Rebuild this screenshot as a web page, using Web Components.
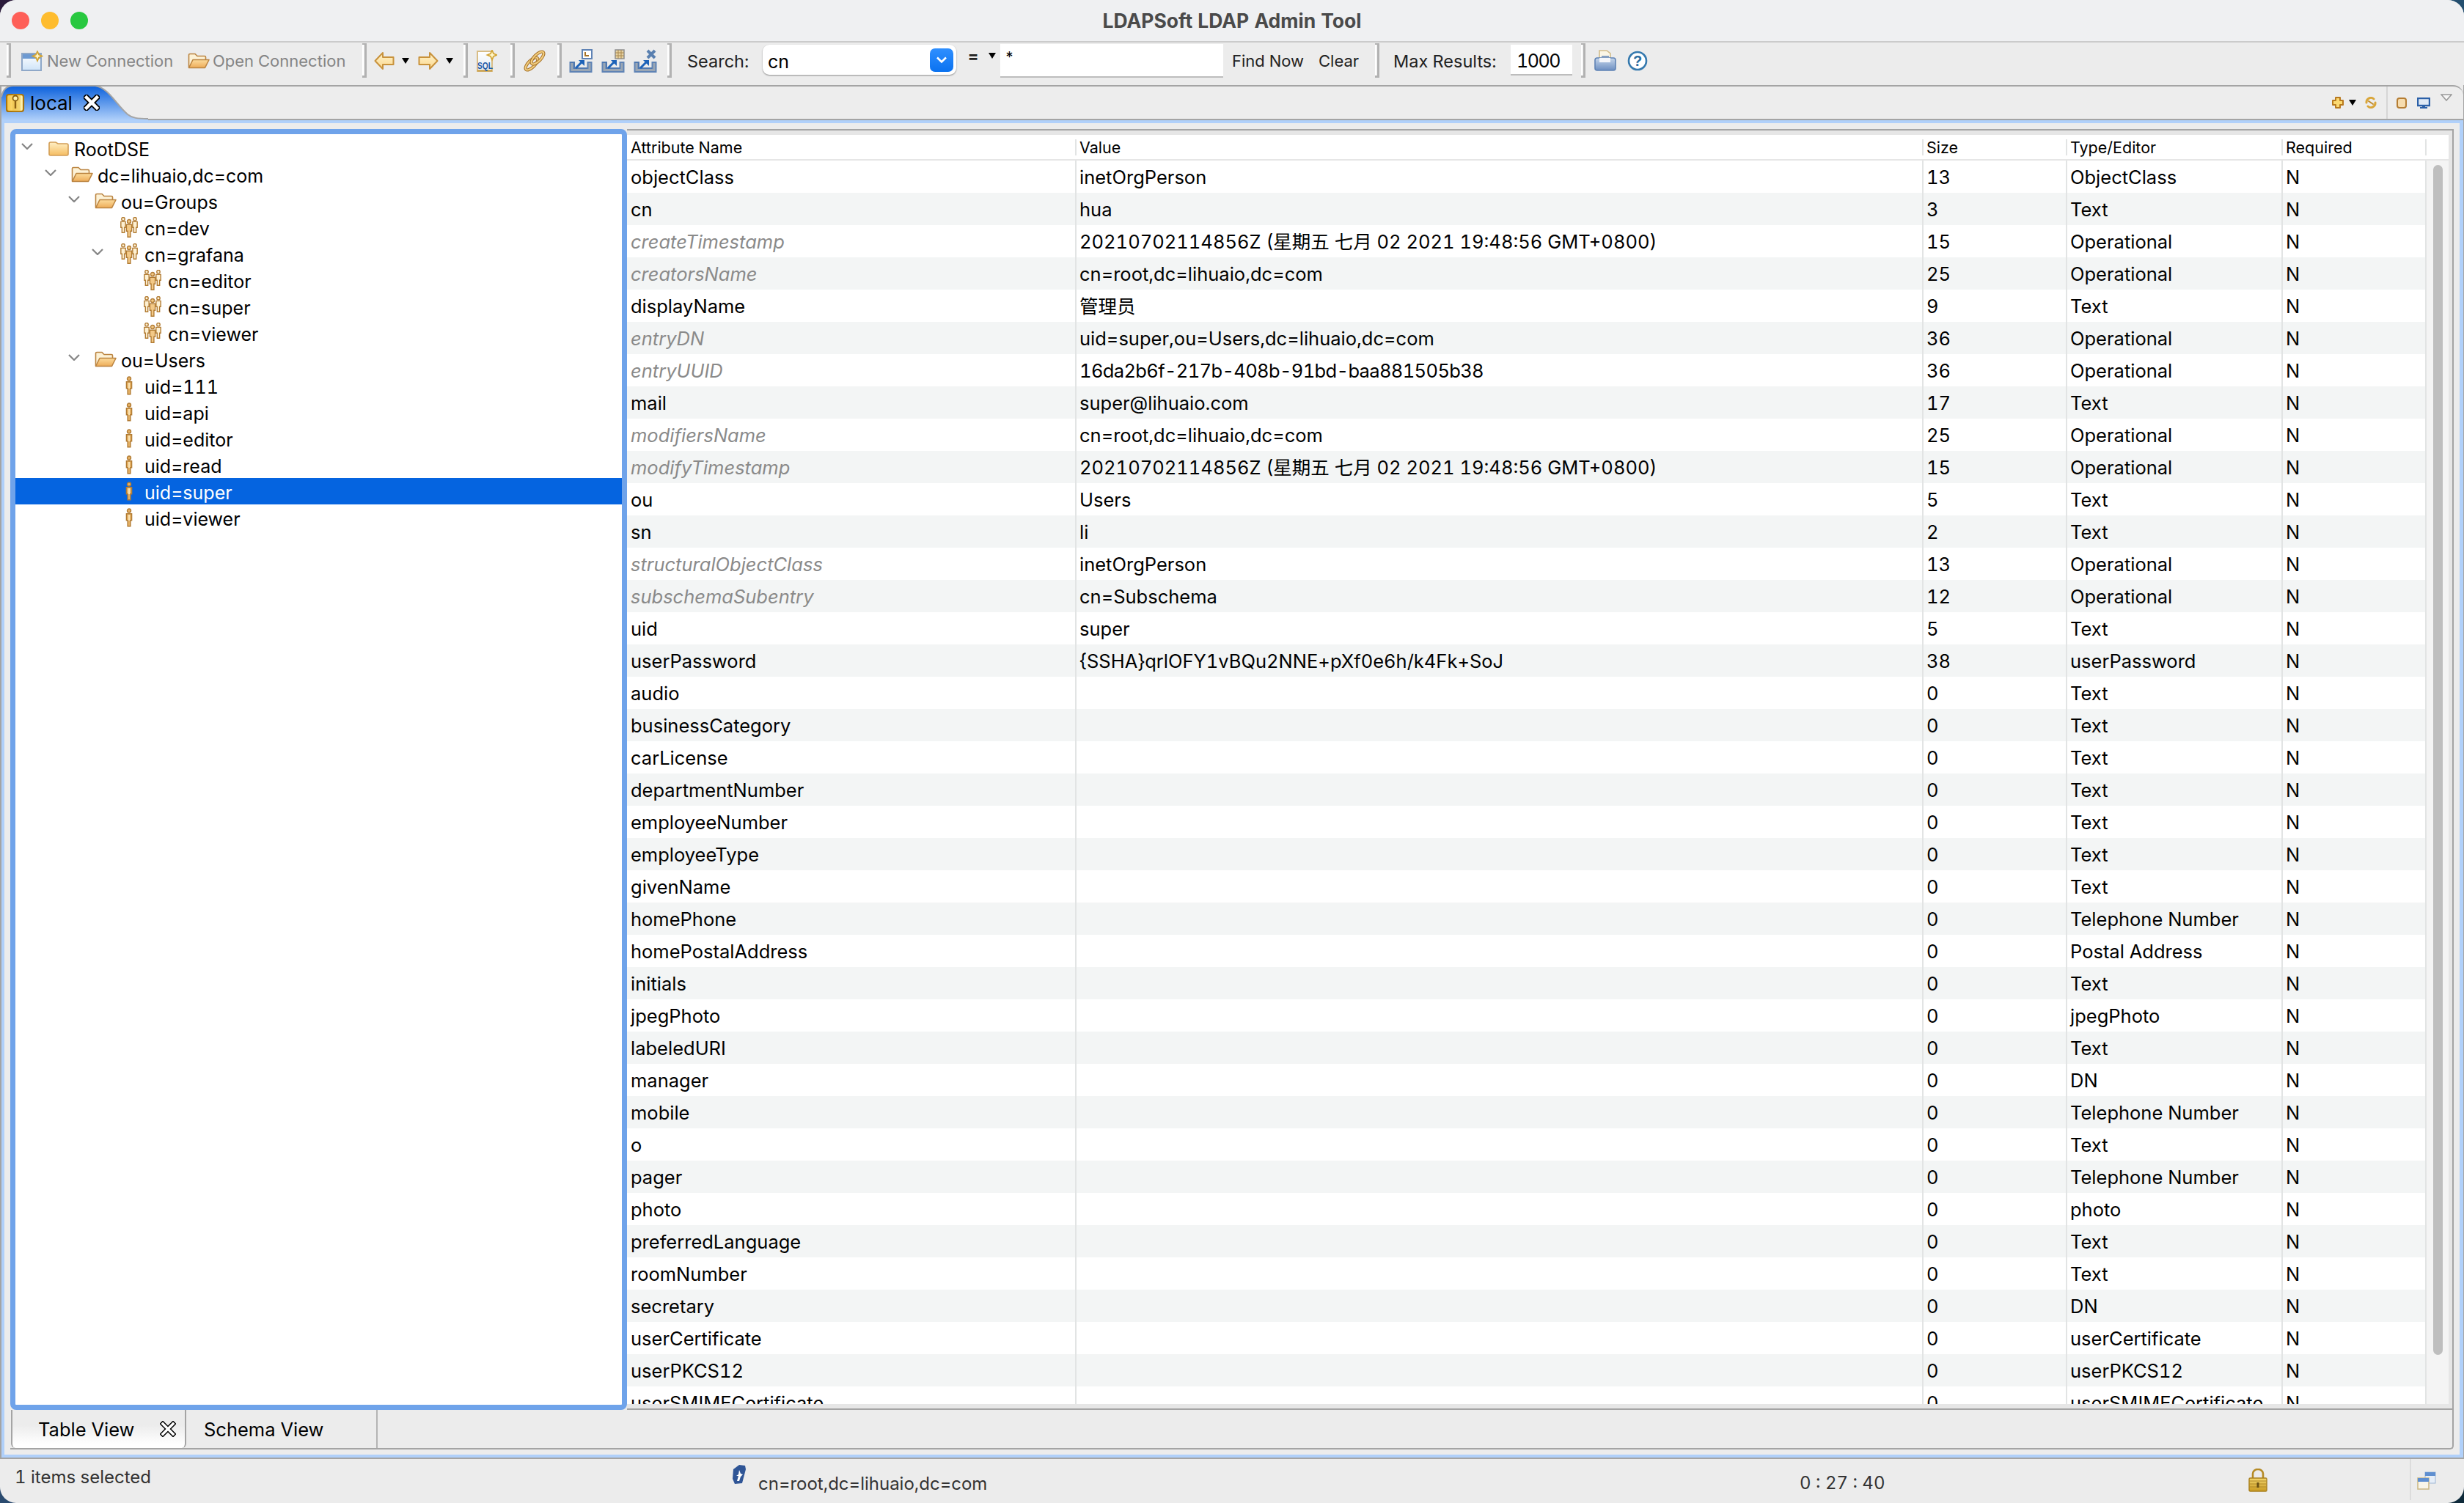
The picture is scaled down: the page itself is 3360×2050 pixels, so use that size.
<!doctype html>
<html>
<head>
<meta charset="utf-8">
<style>
  html { background: linear-gradient(135deg, #2a1a3a 0%, #2a5a80 50%, #0e2a3a 100%); }
  body { margin: 0; width: 3360px; height: 2050px; overflow: hidden; font-family: Inter, "Noto Sans CJK SC", sans-serif; font-feature-settings: "tnum"; }
</style>
</head>
<body>
<ldap-window>
  <ldap-titlebar slot="title">LDAPSoft LDAP Admin Tool</ldap-titlebar>
  <ldap-toolbar slot="toolbar"></ldap-toolbar>
  <ldap-tabstrip slot="tabs"></ldap-tabstrip>
  <ldap-tree slot="tree"></ldap-tree>
  <ldap-table slot="table"></ldap-table>
  <ldap-viewtabs slot="views"></ldap-viewtabs>
  <ldap-status slot="status"></ldap-status>
</ldap-window>

<script>
const grad = (id, a, b, horiz) =>
  `<defs><linearGradient id="${id}" x1="0" y1="0" x2="${horiz ? 1 : 0}" y2="${horiz ? 0 : 1}"><stop offset="0" stop-color="${a}"/><stop offset="1" stop-color="${b}"/></linearGradient></defs>`;

const star = (x, y) =>
  `<path d="M${x} ${y - 6.5}L${x + 2} ${y - 2}L${x + 6.5} ${y}L${x + 2} ${y + 2}L${x} ${y + 6.5}L${x - 2} ${y + 2}L${x - 6.5} ${y}L${x - 2} ${y - 2}Z" fill="#fff6c8" stroke="#d2a436" stroke-width="1.8"/>`;

const man = (x, y, s, fill) =>
  `<g transform="translate(${x} ${y}) scale(${s})" fill="${fill}" stroke="#b27c34" stroke-width="${1.4 / s}"><circle cx="0" cy="3" r="2.5"/><path d="M-3.6 7.2h7.2v9h-1.7v8h-3.8v-8h-1.7z"/></g>`;

const tray = (extra) => `
  <path d="M1.5 18v13h29V18h-5v8H6.500v-8z" fill="#9aa6b4" stroke="#5f83b5" stroke-width="2"/>
  <path d="M1 18h6v8h18" fill="none" stroke="#4f78b0" stroke-width="2"/>
  <path d="M9 26L17 18" stroke="#1d62b8" stroke-width="3"/><path d="M13 15h8v8z" fill="#1d62b8"/>
  ${extra}`;

const ring = (cx, cy) =>
  `<ellipse cx="${cx}" cy="${cy}" rx="11" ry="4.500" transform="rotate(-45 ${cx} ${cy})" fill="none" stroke="#a8742a" stroke-width="4.200"/><ellipse cx="${cx}" cy="${cy}" rx="11" ry="4.500" transform="rotate(-45 ${cx} ${cy})" fill="none" stroke="#f3cf80" stroke-width="2"/>`;

const ICONS = {
  folder: [28, 22, `${grad("g", "#fff0c6", "#f5bd62")}<path d="M1 5a2 2 0 0 1 2-2h7l3 2h12a2 2 0 0 1 2 2v12a2 2 0 0 1-2 2H3a2 2 0 0 1-2-2z" fill="url(#g)" stroke="#d29d55" stroke-width="1.6"/>`],
  open: [30, 22, `${grad("g", "#fcdc9c", "#edab58")}<path d="M1.500 20V3a1.500 1.500 0 0 1 1.500-1.500h7l3 3h10a1.500 1.500 0 0 1 1.500 1.500V9" fill="#fdf2d6" stroke="#bb8440" stroke-width="1.600"/><path d="M1.500 20.500L7 9.500H29L23.500 20.500z" fill="url(#g)" stroke="#bb8440" stroke-width="1.600" stroke-linejoin="round"/>`],
  group: [26, 28, `${man(5, 0, .88, "#fdf0d2")}${man(21, 0, .88, "#fdf0d2")}${man(13, 3, 1, "#f3c987")}`],
  person: [12, 26, `${man(6, .5, 1, "#e6b266")}<path d="M5 9h2v8H5z" fill="#fbe5b6"/>`],
  db: [26, 28, `${grad("g", "#f8c645", "#fff6b8", true)}<rect x="1" y="3" width="23" height="23" rx="3" fill="url(#g)" stroke="#a8740e" stroke-width="2.200"/><rect x="9" y="2" width="11" height="24" fill="#e0a820" opacity=".35"/><circle cx="13" cy="8" r="3.500" fill="#fff3b0" stroke="#8a5f12" stroke-width="1.800"/><path d="M13 11v11" stroke="#8a5f12" stroke-width="2.400"/>`],
  newconn: [30, 28, `${grad("g", "#ffffff", "#cfe4f8")}<rect x="1" y="4" width="26" height="23" fill="url(#g)" stroke="#8fa8c8" stroke-width="2"/><rect x="2" y="5" width="24" height="6" fill="#6d9ad2"/>${star(22, 7.500)}`],
  back: [28, 26, `${grad("g", "#fff3cc", "#fbd88e")}<path d="M1.500 13L12 2v6h14.500v10H12v6z" fill="url(#g)" stroke="#c8923c" stroke-width="2" stroke-linejoin="round"/>`],
  forward: [28, 26, `${grad("g", "#fff3cc", "#fbd88e")}<path d="M26.500 13L16 2v6H1.500v10H16v6z" fill="url(#g)" stroke="#c8923c" stroke-width="2" stroke-linejoin="round"/>`],
  sql: [28, 30, `${grad("g", "#fff", "#e4ecf2")}<path d="M1 2h20v27H1z" fill="url(#g)" stroke="#d8bd86" stroke-width="2"/><path d="M1 28.500h20" stroke="#c89a3c" stroke-width="2"/><text x="1" y="26" font-family="'Liberation Sans',sans-serif" font-size="13" font-weight="700" fill="#1f5aa6" textLength="21" lengthAdjust="spacingAndGlyphs">SQL</text>${star(21, 7)}`],
  link: [30, 30, `${ring(11, 19)}${ring(19, 11)}`],
  imp1: [32, 32, tray(`<rect x="18" y="1" width="13" height="12" fill="#fff" stroke="#5f83b5" stroke-width="2"/><path d="M22 4v5h5" fill="none" stroke="#a87428" stroke-width="2"/>`)],
  imp2: [32, 32, tray(`<rect x="19" y="1" width="12" height="12" fill="#e8d2a0" stroke="#8f8f8f" stroke-width="1.500"/><path d="M23 1v12M27 1v12M19 5h12M19 9h12" stroke="#a88850" stroke-width="1"/>`)],
  imp3: [32, 32, tray(`<path d="M19 2l10 10M29 2L19 12" stroke="#5a80b0" stroke-width="4"/>`)],
  print: [30, 30, `${grad("g", "#c6d6ea", "#6d8fc2")}<path d="M7 1h10l5 4v12H7z" fill="#fbf6e6" stroke="#d2bd8c" stroke-width="1.600"/><path d="M10 9h10M10 12.500h10" stroke="#5f83b5" stroke-width="1.600"/><rect x="1" y="11" width="28" height="17" rx="3" fill="url(#g)" stroke="#5f83b5" stroke-width="1.600"/><path d="M7 11h15v6H7z" fill="#f4f6fa"/>`],
  help: [28, 28, `<circle cx="14" cy="14" r="12" fill="#fff" stroke="#3579ae" stroke-width="2.600"/><text x="14" y="21" text-anchor="middle" font-family="'Liberation Sans',sans-serif" font-size="20" font-weight="700" fill="#2a6ca0">?</text>`],
  plus: [16, 16, `<path d="M5 1h6v4h4v6h-4v4H5v-4H1V5h4z" fill="#fbd971" stroke="#b8791e" stroke-width="2" stroke-linejoin="round"/>`],
  sync: [16, 16, `<g fill="none" stroke-linecap="round"><path d="M2 8a6 6 0 0 1 10-5M14 8a6 6 0 0 1-10 5" stroke="#d9a63a" stroke-width="3"/><path d="M5 6l6 4" stroke="#c08a2a" stroke-width="2"/></g>`],
  cyl: [14, 15, `<rect x="1" y="1" width="12" height="13" rx="3" fill="#f6dcae" stroke="#b57d33" stroke-width="2"/>`],
  monitor: [18, 15, `<rect x="1" y="1" width="16" height="10" fill="#dfe9f5" stroke="#2b60a8" stroke-width="2.400"/><path d="M7 11h4v2h3v2H4v-2h3z" fill="#2b60a8"/>`],
  user: [25, 27, `<path d="M5 7l8-6 8 1 1 5-5 19-10 1-3-7z" fill="#2f5596"/><path d="M13 8l-1 6-3 2 3 0-2 7h3l2-6 3-3-3-1z" fill="#fff"/>`],
  lock: [26, 32, `${grad("g", "#f3d66e", "#c99a20")}<path d="M6 14V7a7 6 0 0 1 14 0v7" fill="none" stroke="#b58a24" stroke-width="2.600"/><rect x="1" y="13" width="24" height="18" rx="1.500" fill="url(#g)" stroke="#a9801f" stroke-width="1.400"/><path d="M1 17h24M1 21h24M1 25h24" stroke="#b28a28" stroke-width="1"/><path d="M13 19v7" stroke="#6a5014" stroke-width="3"/>`],
  windows: [27, 25, `<rect x="12" y="1" width="14" height="15" fill="#e6eef8" stroke="#9db6d4"/><rect x="12" y="1" width="14" height="5" fill="#5f8fd0"/><rect x="2" y="9" width="15" height="15" fill="#f9f6ea" stroke="#cdbb88" stroke-width="1.600"/><rect x="2" y="9" width="15" height="5" fill="#5f8fd0"/>`],
  chev: [16, 10, `<path d="M2 1.500l6 6l6-6" fill="none" stroke="#fff" stroke-width="2.600"/>`],
  chevtri: [16, 10, `<path d="M1 1h14L8 9z" fill="#f6f6f6" stroke="#999" stroke-width="1.600"/>`],
};

class LdapIcon extends HTMLElement {
  connectedCallback() {
    const [w, h, body] = ICONS[this.getAttribute("name")];
    this.attachShadow({ mode: "open" }).innerHTML = `
      <style>:host { display: block; width: ${w}px; height: ${h}px; flex: none; } svg { display: block; }</style>
      <svg width="${w}" height="${h}" viewBox="0 0 ${w} ${h}">${body}</svg>`;
  }
}

class LdapWindow extends HTMLElement {
  constructor() {
    super();
    this.attachShadow({ mode: "open" }).innerHTML = `
      <style>
        :host { display: flex; flex-direction: column; width: 3360px; height: 2050px; background: #ececec; border-radius: 22px; overflow: hidden; color: #000; }
        .editor { flex: 1; min-height: 0; display: flex; flex-direction: column; border-left: 2px solid #a4a4a4; border-right: 1px solid #a4a4a4; border-bottom: 2px solid #a4a4a4; }
        .blue { flex: 1; min-height: 0; display: flex; flex-direction: column; border: solid #b0d0fa; border-width: 4px 5px 4px 4px; padding: 8px 8px 7px 8px; }
        .split { flex: 1; min-height: 0; display: flex; }
      </style>
      <slot name="title"></slot>
      <slot name="toolbar"></slot>
      <div class="editor">
        <slot name="tabs"></slot>
        <div class="blue">
          <div class="split"><slot name="tree"></slot><slot name="table"></slot></div>
          <slot name="views"></slot>
        </div>
      </div>
      <slot name="status"></slot>`;
  }
}

class LdapTitlebar extends HTMLElement {
  constructor() {
    super();
    this.attachShadow({ mode: "open" }).innerHTML = `
      <style>
        :host { display: flex; align-items: center; justify-content: center; position: relative; height: 56px; flex: none; background: #eff0f2; border-bottom: 2px solid #cbcbcb; font-size: 26.500px; font-weight: 700; color: #4a4a4a; }
        .lights { position: absolute; left: 16px; top: 16px; display: flex; gap: 16px; }
        .lights i { width: 24px; height: 24px; border-radius: 50%; }
      </style>
      <div class="lights"><i style="background:#fe5f58"></i><i style="background:#febc2e"></i><i style="background:#28c840"></i></div>
      <slot></slot>`;
  }
}

const at = (ml, w, html, cls = "") => `<span class="i ${cls}" style="margin-left:${ml}px;width:${w}px">${html}</span>`;
const grip = (ml) => at(ml, 6, `<span class="grip"></span>`);
const ico = (n) => `<ldap-icon name="${n}"></ldap-icon>`;
const tri = `<span class="tri"></span>`;

class LdapToolbar extends HTMLElement {
  connectedCallback() {
    this.attachShadow({ mode: "open" }).innerHTML = `
      <style>
        :host { display: flex; align-items: flex-start; flex: none; height: 56px; padding: 2px 0 0 9px; background: #ececec; font-size: 22px; color: #222; white-space: nowrap; }
        .i { display: flex; flex: none; align-items: center; height: 46px; }
        .off { color: #858585; }
        .big { font-size: 23.500px; }
        .grip { display: block; width: 4px; height: 42px; border: solid #b2b2b2; border-width: 2px 3px 3px 0; box-shadow: inset 2px 0 0 #fff; margin-top: -2px; }
        .tri { display: block; width: 0; height: 0; border: 5px solid transparent; border-top: 8px solid #000; border-bottom: 0; }
        .combo { box-sizing: border-box; width: 264px; height: 41px; margin-top: -3px; padding: 0 4px 0 7px; display: flex; align-items: center; justify-content: space-between; background: #fff; border-radius: 9px; box-shadow: 0 1px 2px rgba(0,0,0,.4); font-size: 25px; color: #000; }
        .combo em { font-style: normal; padding-top: 4px; }
        .combo b { width: 32px; height: 32px; border-radius: 7px; background: linear-gradient(#2f8fff, #0a72f0); display: grid; place-content: center; }
        .box { box-sizing: border-box; width: 100%; background: #fff; border-bottom: 2px solid #bdbdbd; color: #000; }
      </style>
      ${grip(0)}
      ${at(14, 30, ico("newconn"))}
      ${at(5, 186, "New Connection", "off")}
      ${at(6, 30, ico("open"))}
      ${at(4, 190, "Open Connection", "off")}
      ${grip(14)}
      ${at(10, 28, ico("back"))}
      ${at(10, 22, tri)}
      ${at(0, 28, ico("forward"))}
      ${at(10, 24, tri)}
      ${grip(0)}
      ${at(12, 28, ico("sql"))}
      ${grip(18)}
      ${at(12, 30, ico("link"))}
      ${grip(16)}
      ${at(10, 32, ico("imp1"))}
      ${at(12, 32, ico("imp2"))}
      ${at(12, 32, ico("imp3"))}
      ${grip(14)}
      ${at(21, 103, "Search:", "big")}
      ${at(0, 264, `<span class="combo"><em>cn</em><b>${ico("chev")}</b></span>`)}
      ${at(16, 28, `<span style="font-weight:700;margin-top:-14px">=</span>`)}
      ${at(0, 16, `<span style="margin-top:-14px">${tri}</span>`)}
      ${at(0, 304, `<span class="box" style="height:46px;padding:6px 6px 0;font-size:20px">*</span>`)}
      ${at(12, 118, "Find Now")}
      ${at(0, 77, "Clear")}
      ${grip(0)}
      ${at(19, 160, "Max Results:", "big")}
      ${at(0, 84, `<span class="box" style="height:42px;line-height:44px;padding-left:8px;font-size:25px;letter-spacing:-1.500px;margin-top:-3px">1000</span>`)}
      ${grip(12)}
      ${at(12, 30, ico("print"))}
      ${at(15, 28, ico("help"))}`;
  }
}

class LdapTabstrip extends HTMLElement {
  connectedCallback() {
    this.attachShadow({ mode: "open" }).innerHTML = `
      <style>
        :host { display: flex; align-items: center; flex: none; box-sizing: border-box; height: 48px; background: #ededed; border-top: 2px solid #a4a4a4; border-bottom: 2px solid #a4a4a4; border-top-right-radius: 14px; }
        .tab { position: relative; flex: none; width: 200px; height: 44px; display: flex; align-items: center; font-size: 26px; }
        .tab svg.shape { position: absolute; left: 0; top: -2px; }
        .tab > *:not(.shape) { position: relative; }
        .tools { margin-left: auto; display: flex; align-items: center; height: 44px; }
        .tri { width: 0; height: 0; border: 5px solid transparent; border-top: 8px solid #000; border-bottom: 0; margin: 0 12px 0 7px; }
        .sep { width: 2px; height: 44px; background: #d6d6d6; margin: 0 12px 0 13px; }
        .drop { margin: -14px 15px 0 14px; }
      </style>
      <div class="tab">
        <svg class="shape" width="200" height="48" viewBox="0 0 200 48">
          ${grad("t", "#0a60dc", "#b0d0fa")}
          <path d="M0 48V16C2 6 8 1 16 1H128C146 4 156 26 172 40C178 45 186 46 200 46V48Z" fill="url(#t)"/>
          <path d="M0 16C2 6 8 1 16 1H128C146 4 156 26 172 40C178 45 186 46 200 46" fill="none" stroke="#a4a4a4" stroke-width="2"/>
        </svg>
        <ldap-icon name="db" style="margin-left:6px"></ldap-icon>
        <span style="margin-left:7px;width:73px">local</span>
        <svg width="22" height="22" viewBox="0 0 22 22"><path d="M4 4l14 14M18 4L4 18" stroke="#000" stroke-width="8" stroke-linecap="square"/><path d="M4 4l14 14M18 4L4 18" stroke="#fff" stroke-width="4.500" stroke-linecap="square"/></svg>
      </div>
      <div class="tools">
        <ldap-icon name="plus"></ldap-icon><span class="tri"></span>
        <ldap-icon name="sync"></ldap-icon>
        <span class="sep"></span>
        <ldap-icon name="cyl"></ldap-icon>
        <ldap-icon name="monitor" style="margin-left:14px"></ldap-icon>
        <span class="drop"><ldap-icon name="chevtri"></ldap-icon></span>
      </div>`;
  }
}

const TREE = [
  [0, "folder", 1, "RootDSE"],
  [1, "open", 1, "dc=lihuaio,dc=com"],
  [2, "open", 1, "ou=Groups"],
  [3, "group", 0, "cn=dev"],
  [3, "group", 1, "cn=grafana"],
  [4, "group", 0, "cn=editor"],
  [4, "group", 0, "cn=super"],
  [4, "group", 0, "cn=viewer"],
  [2, "open", 1, "ou=Users"],
  [3, "person", 0, "uid=111"],
  [3, "person", 0, "uid=api"],
  [3, "person", 0, "uid=editor"],
  [3, "person", 0, "uid=read"],
  [3, "person", 0, "uid=super", true],
  [3, "person", 0, "uid=viewer"],
];

class LdapTreeRow extends HTMLElement {
  connectedCallback() {
    const level = +this.getAttribute("level");
    const kids = this.hasAttribute("open");
    const sel = this.hasAttribute("selected");
    this.attachShadow({ mode: "open" }).innerHTML = `
      <style>
        :host { display: flex; align-items: center; height: 36px; font-size: 25px; white-space: nowrap; padding-left: ${level * 32 + 8}px; ${sel ? "background:#0564e0;color:#fff;" : ""} }
        .chev { width: 16px; height: 9px; flex: none; margin-top: -6px; }
        .slot { width: 32px; margin-left: 18.500px; margin-right: 5.500px; display: flex; justify-content: center; flex: none; }
        .text { padding-top: 3px; }
      </style>
      ${kids ? `<svg class="chev" viewBox="0 0 16 9"><path d="M1 1l7 7l7-7" fill="none" stroke="#858585" stroke-width="2.200"/></svg>` : `<span class="chev"></span>`}
      <span class="slot"><ldap-icon name="${this.getAttribute("icon")}"></ldap-icon></span>
      <span class="text"><slot></slot></span>`;
  }
}

class LdapTree extends HTMLElement {
  connectedCallback() {
    const rows = TREE.map(([l, ic, op, t, sel]) =>
      `<ldap-tree-row level="${l}" icon="${ic}" ${op ? "open" : ""} ${sel ? "selected" : ""}>${t}</ldap-tree-row>`).join("");
    this.attachShadow({ mode: "open" }).innerHTML = `
      <style>
        :host { display: block; box-sizing: border-box; flex: none; width: 841px; height: 100%; background: #fff; border: 7px solid #6fa3ea; border-radius: 8px; padding-top: 1px; }
      </style>
      ${rows}`;
  }
}

const T = "Text", O = "Operational", TZ = "20210702114856Z (星期五 七月 02 2021 19:48:56 GMT+0800)";
const ATTRS = [
  ["objectClass", "inetOrgPerson", 13, "ObjectClass"],
  ["cn", "hua", 3, T],
  ["createTimestamp", TZ, 15, O, 1],
  ["creatorsName", "cn=root,dc=lihuaio,dc=com", 25, O, 1],
  ["displayName", "管理员", 9, T],
  ["entryDN", "uid=super,ou=Users,dc=lihuaio,dc=com", 36, O, 1],
  ["entryUUID", "<span style='letter-spacing:-.65px'>16da2b6f-217b-408b-91bd-baa881505b38</span>", 36, O, 1],
  ["mail", "super@lihuaio.com", 17, T],
  ["modifiersName", "cn=root,dc=lihuaio,dc=com", 25, O, 1],
  ["modifyTimestamp", TZ, 15, O, 1],
  ["ou", "Users", 5, T],
  ["sn", "li", 2, T],
  ["structuralObjectClass", "inetOrgPerson", 13, O, 1],
  ["subschemaSubentry", "cn=Subschema", 12, O, 1],
  ["uid", "super", 5, T],
  ["userPassword", "{SSHA}qrlOFY1vBQu2NNE+pXf0e6h/k4Fk+SoJ", 38, "userPassword"],
  ["audio", "", 0, T],
  ["businessCategory", "", 0, T],
  ["carLicense", "", 0, T],
  ["departmentNumber", "", 0, T],
  ["employeeNumber", "", 0, T],
  ["employeeType", "", 0, T],
  ["givenName", "", 0, T],
  ["homePhone", "", 0, "Telephone Number"],
  ["homePostalAddress", "", 0, "Postal Address"],
  ["initials", "", 0, T],
  ["jpegPhoto", "", 0, "jpegPhoto"],
  ["labeledURI", "", 0, T],
  ["manager", "", 0, "DN"],
  ["mobile", "", 0, "Telephone Number"],
  ["o", "", 0, T],
  ["pager", "", 0, "Telephone Number"],
  ["photo", "", 0, "photo"],
  ["preferredLanguage", "", 0, T],
  ["roomNumber", "", 0, T],
  ["secretary", "", 0, "DN"],
  ["userCertificate", "", 0, "userCertificate"],
  ["userPKCS12", "", 0, "userPKCS12"],
  ["userSMIMECertificate", "", 0, "userSMIMECertificate"],
];

class LdapRow extends HTMLElement {
  connectedCallback() {
    const cells = (this.getAttribute("cells") || "").split("|");
    const op = this.hasAttribute("operational");
    this.attachShadow({ mode: "open" }).innerHTML = `
      <style>
        :host { display: grid; grid-template-columns: var(--cols); height: 44px; font-size: 25.500px; white-space: nowrap; background: ${this.hasAttribute("alt") ? "#f3f5f5" : "#fff"}; }
        div { box-sizing: border-box; line-height: 45px; padding-left: 4px; border-left: 2px solid #e2e4e4; overflow: hidden; }
        div:first-of-type { border-left: 0; padding-left: 5px; ${op ? "color:#8a8a8a;font-style:italic;" : ""} }
      </style>
      ${cells.map((c) => `<div>${c}</div>`).join("")}`;
  }
}

class LdapTable extends HTMLElement {
  connectedCallback() {
    const heads = ["Attribute Name", "Value", "Size", "Type/Editor", "Required"];
    const rows = ATTRS.map(([n, v, s, t, op], i) =>
      `<ldap-row cells="${[n, v, s, t, "N"].join("|")}" ${op ? "operational" : ""} ${i % 2 ? "alt" : ""}></ldap-row>`).join("");
    this.attachShadow({ mode: "open" }).innerHTML = `
      <style>
        :host { --cols: 611px 1155px 196px 294px 196px; display: flex; flex-direction: column; flex: 1; min-width: 0; height: 100%; box-sizing: border-box; background: #e6e6e6; border: solid #a4a4a4; border-width: 2px 2px 2px 0; padding: 6px 5px 6px 0; }
        .head { flex: none; display: grid; grid-template-columns: var(--cols) 33px; height: 33px; background: #fff; border-bottom: 2px solid #e6e6e6; font-size: 21.500px; align-items: center; }
        .head span { box-sizing: border-box; height: 22px; line-height: 22px; padding-left: 4px; border-left: 2px solid #e2e4e4; white-space: nowrap; }
        .head span:first-child { border-left: 0; padding-left: 5px; }
        .body { flex: 1; min-height: 0; display: flex; }
        .rows { width: 2452px; flex: none; overflow: hidden; }
        .track { flex: 1; background: #f4f4f4; padding: 6px 8px 0 9px; border-left: 2px solid #e2e4e4; }
        .thumb { height: 1623px; background: #bebebe; border-radius: 8px; }
      </style>
      <div class="head">${heads.map((h) => `<span>${h}</span>`).join("")}<span></span></div>
      <div class="body">
        <div class="rows">${rows}</div>
        <div class="track"><div class="thumb"></div></div>
      </div>`;
  }
}

class LdapViewtabs extends HTMLElement {
  connectedCallback() {
    this.attachShadow({ mode: "open" }).innerHTML = `
      <style>
        :host { display: flex; flex: none; box-sizing: border-box; height: 54px; font-size: 25.500px; background: #ececec; border-bottom: 2px solid #a4a4a4; border-right: 2px solid #a4a4a4; border-bottom-right-radius: 5px; }
        .t { display: flex; align-items: center; box-sizing: border-box; height: 100%; white-space: nowrap; }
        .a { margin-left: 1px; width: 239px; padding-left: 35px; background: linear-gradient(#ececec 40%, #fff 90%); border: solid #a4a4a4; border-width: 0 2px 0 2px; border-bottom-left-radius: 6px; border-bottom-right-radius: 6px; }
        .b { width: 261px; padding-left: 24px; border-right: 2px solid #b4b4b4; }
        svg { margin-left: 36px; }
      </style>
      <div class="t a"><span style="width:130px">Table View</span><svg width="22" height="22" viewBox="0 0 22 22"><path d="M4 4l14 14M18 4L4 18" stroke="#000" stroke-width="6.500" stroke-linecap="square"/><path d="M4 4l14 14M18 4L4 18" stroke="#fff" stroke-width="3.500" stroke-linecap="square"/></svg></div>
      <div class="t b">Schema View</div>`;
  }
}

class LdapStatus extends HTMLElement {
  connectedCallback() {
    const item = (ml, mt, w, html) => `<span style="margin-left:${ml}px;margin-top:${mt}px;width:${w}px;flex:none;line-height:30px;white-space:nowrap">${html}</span>`;
    this.attachShadow({ mode: "open" }).innerHTML = `
      <style>
        :host { display: flex; align-items: flex-start; flex: none; height: 60px; font-size: 24px; color: #333; }
        .sep { width: 2px; height: 56px; background: #dcdcdc; margin-left: 194px; flex: none; }
      </style>
      ${item(20, 10, 975, "1 items selected")}
      ${item(0, 7, 39, ico("user"))}
      ${item(0, 19, 1420, "cn=root,dc=lihuaio,dc=com")}
      ${item(0, 18, 612, "0 : 27 : 40")}
      ${item(0, 13, 26, ico("lock"))}
      <span class="sep"></span>
      ${item(7, 17, 27, ico("windows"))}`;
  }
}

customElements.define("ldap-icon", LdapIcon);
customElements.define("ldap-window", LdapWindow);
customElements.define("ldap-titlebar", LdapTitlebar);
customElements.define("ldap-toolbar", LdapToolbar);
customElements.define("ldap-tabstrip", LdapTabstrip);
customElements.define("ldap-tree-row", LdapTreeRow);
customElements.define("ldap-tree", LdapTree);
customElements.define("ldap-row", LdapRow);
customElements.define("ldap-table", LdapTable);
customElements.define("ldap-viewtabs", LdapViewtabs);
customElements.define("ldap-status", LdapStatus);
</script>
</body>
</html>
